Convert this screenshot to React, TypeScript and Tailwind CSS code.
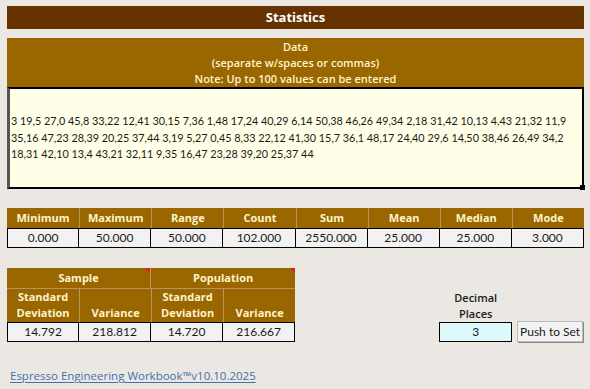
import React from "react";

const data =
  "3 19,5 27,0 45,8 33,22 12,41 30,15 7,36 1,48 17,24 40,29 6,14 50,38 46,26 49,34 2,18 31,42 10,13 4,43 21,32 11,9 35,16 47,23 28,39 20,25 37,44 3,19 5,27 0,45 8,33 22,12 41,30 15,7 36,1 48,17 24,40 29,6 14,50 38,46 26,49 34,2 18,31 42,10 13,4 43,21 32,11 9,35 16,47 23,28 39,20 25,37 44";

const lines = [
  "3 19,5 27,0 45,8 33,22 12,41 30,15 7,36 1,48 17,24 40,29 6,14 50,38 46,26 49,34 2,18 31,42 10,13 4,43 21,32 11,9",
  "35,16 47,23 28,39 20,25 37,44 3,19 5,27 0,45 8,33 22,12 41,30 15,7 36,1 48,17 24,40 29,6 14,50 38,46 26,49 34,2",
  "18,31 42,10 13,4 43,21 32,11 9,35 16,47 23,28 39,20 25,37 44",
];

const stats = [
  { label: "Minimum", value: "0.000" },
  { label: "Maximum", value: "50.000" },
  { label: "Range", value: "50.000" },
  { label: "Count", value: "102.000" },
  { label: "Sum", value: "2550.000" },
  { label: "Mean", value: "25.000" },
  { label: "Median", value: "25.000" },
  { label: "Mode", value: "3.000" },
];

const head = "font-['Open_Sans',sans-serif] font-bold text-[11px] text-[#fff4cc]";
const body = "font-['Lato','Open_Sans',sans-serif] text-[12px] text-[#1a1a1a]";

function Flag() {
  return (
    <span className="absolute top-0 right-0 w-0 h-0 border-t-[5px] border-t-[#e02020] border-l-[5px] border-l-transparent" />
  );
}

export default function App() {
  return (
    <div className="w-[590px] h-[389px] bg-[#ebe8e3] px-[7px] pt-[6px] overflow-hidden">
      <div className="w-[577px] h-[23px] bg-[#663300] flex items-center justify-center">
        <span className="font-['Open_Sans',sans-serif] font-bold text-[13px] text-white">
          Statistics
        </span>
      </div>

      <div className={`mt-[9px] w-[577px] h-[49px] bg-[#996600] flex flex-col items-center justify-center leading-[16px] ${head} font-semibold text-[11px]`}>
        <span>Data</span>
        <span>(separate w/spaces or commas)</span>
        <span>Note: Up to 100 values can be entered</span>
      </div>

      <div
        title={data}
        className="relative w-[577px] h-[102px] bg-[#fffee6] border-[2px] border-black border-l-[3px] border-l-[#555] flex flex-col justify-center pl-[1px]"
      >
        {lines.map((l) => (
          <div key={l} className="font-['Lato','Open_Sans',sans-serif] text-[10.8px] text-[#1a1a1a] leading-[16.5px] whitespace-nowrap">
            {l}
          </div>
        ))}
        <span className="absolute -right-[3px] -bottom-[3px] w-[5px] h-[5px] bg-black" />
      </div>

      <div className="mt-[19px] w-[577px] grid grid-cols-8">
        {stats.map((s, i) => (
          <div
            key={s.label}
            className={`h-[20px] bg-[#996600] flex items-center justify-center ${head} ${i > 0 ? "border-l border-[#b8955a]" : ""}`}
          >
            {s.label}
          </div>
        ))}
        {stats.map((s, i) => (
          <div
            key={s.label + "v"}
            className={`h-[20px] bg-[#f2f2f2] border-y border-r border-black flex items-center justify-center ${body} ${i === 0 ? "border-l" : ""}`}
          >
            {s.value}
          </div>
        ))}
      </div>

      <div className="mt-[20px] flex items-end">
        <div className="w-[289px] grid grid-cols-4">
          <div className={`relative col-span-2 h-[20px] bg-[#996600] flex items-center justify-center border-r border-[#b8955a] ${head}`}>
            Sample
            <Flag />
          </div>
          <div className={`relative col-span-2 h-[20px] bg-[#996600] flex items-center justify-center ${head}`}>
            Population
            <Flag />
          </div>
          {["Standard Deviation", "Variance", "Standard Deviation", "Variance"].map((t, i) => (
            <div
              key={i}
              className={`h-[34px] bg-[#996600] border-t border-[#b8955a] flex items-end justify-center text-center leading-[16px] pb-[1px] ${head} ${i > 0 ? "border-l" : ""}`}
            >
              {t === "Variance" ? (
                t
              ) : (
                <span>
                  Standard
                  <br />
                  Deviation
                </span>
              )}
            </div>
          ))}
          {["14.792", "218.812", "14.720", "216.667"].map((v, i) => (
            <div
              key={v}
              className={`h-[20px] bg-[#f2f2f2] border-y border-r border-black flex items-center justify-center ${body} ${i === 0 ? "border-l" : ""}`}
            >
              {v}
            </div>
          ))}
        </div>

        <div className="ml-[144px] w-[73px] flex flex-col items-center">
          <div className="text-center leading-[16px] font-['Open_Sans',sans-serif] font-semibold text-[11px] text-[#1a1a1a]">
            Decimal
            <br />
            Places
          </div>
          <div className={`w-[73px] h-[20px] bg-[#ddf9fb] border border-black flex items-center justify-center ${body}`}>
            3
          </div>
        </div>
        <button className={`ml-[5px] w-[66px] h-[21px] bg-[#f3f3f3] border border-[#bbb] shadow-[1px_1px_0_#888] ${body} text-[11px]`}>
          Push to Set
        </button>
      </div>

      <div className="mt-[20px] pl-[3px]">
        <a className="font-['Open_Sans',sans-serif] text-[11.5px] text-[#4470aa] underline underline-offset-2">
          Espresso Engineering Workbook™v10.10.2025
        </a>
      </div>
    </div>
  );
}
